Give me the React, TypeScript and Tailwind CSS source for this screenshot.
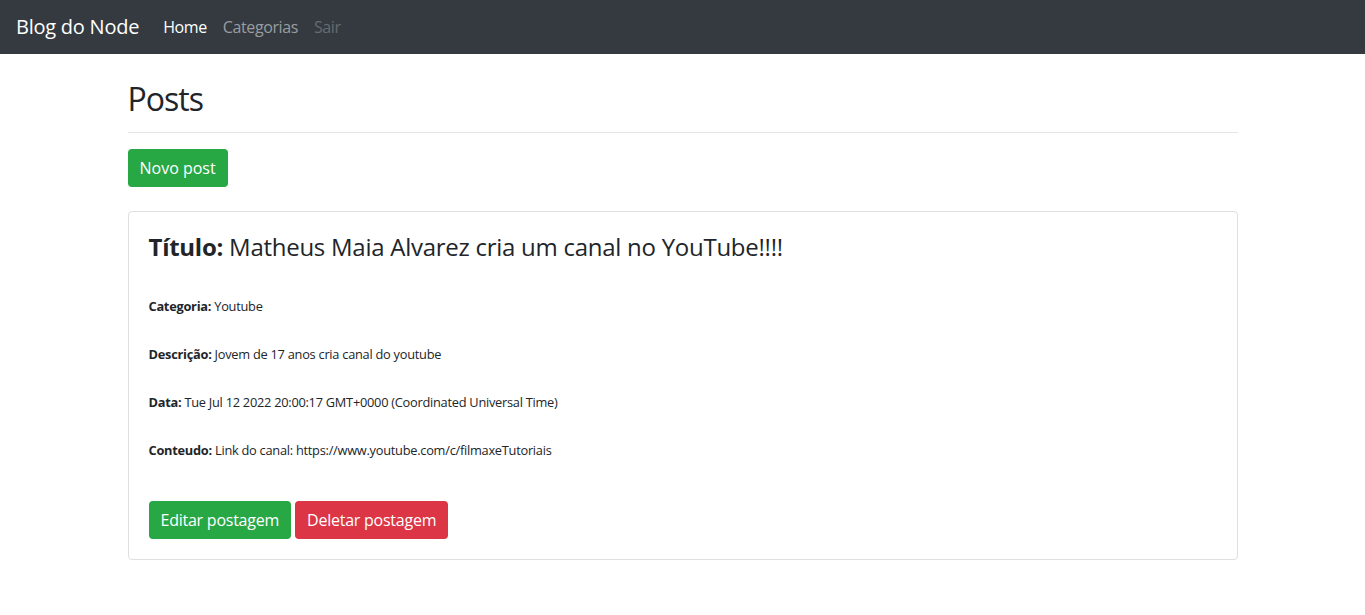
const font = { fontFamily: '"Segoe UI", "Open Sans", "Liberation Sans", sans-serif' };

const Navbar = () => {
  return (
    <nav className="h-[54px] bg-[#343a40] w-full flex items-center px-4">
      {/* Brand */}
      <a href="#" className="text-white text-[20px] leading-[30px] tracking-[-0.012em] mr-4">
        Blog do Node
      </a>

      {/* Links */}
      <div className="flex items-center text-[16px] leading-[24px] tracking-[-0.025em]">
        <a href="#" className="px-2 text-white">Home</a>
        <a href="#" className="px-2 text-[#9a9da0]">Categorias</a>
        <a href="#" className="px-2 text-[#676b70]">Sair</a>
      </div>
    </nav>
  );
};

const Field = ({ label, value }: { label: string; value: string }) => (
  <div className="h-[24px] leading-[24px] text-[12.8px] tracking-[-0.02em]">
    <b className="font-bold">{label}:</b> {value}
  </div>
);

const App = () => {
  return (
    <div className="min-h-screen bg-white text-[#212529]" style={font}>
      <Navbar />

      <div className="w-[1110px] mx-auto">
        {/* Header */}
        <h1 className="mt-[26px] h-[38px] leading-[38px] text-[32px] font-medium tracking-[-0.03em]">Posts</h1>
        <hr className="mt-[14px] border-0 border-t border-[#e5e5e5]" />

        <button className="mt-[16px] h-[38px] px-3 rounded bg-[#28a745] text-white text-[16px] leading-[24px]">
          Novo post
        </button>

        {/* Post card */}
        <div className="mt-[24px] border border-[#dfdfdf] rounded p-5">
          <h4 className="h-[29px] leading-[29px] text-[24px] font-normal tracking-[-0.011em]">
            <b className="font-bold">Título:</b> Matheus Maia Alvarez cria um canal no YouTube!!!!
          </h4>

          <div className="mt-[33px] flex flex-col gap-[24px]">
            <Field label="Categoria" value="Youtube" />
            <Field label="Descrição" value="Jovem de 17 anos cria canal do youtube" />
            <Field label="Data" value="Tue Jul 12 2022 20:00:17 GMT+0000 (Coordinated Universal Time)" />
            <Field label="Conteudo" value="Link do canal: https://www.youtube.com/c/filmaxeTutoriais" />
          </div>

          <div className="mt-[39px] flex gap-1">
            <button className="h-[38px] px-3 rounded bg-[#28a745] text-white text-[16px] leading-[24px] tracking-[-0.015em]">
              Editar postagem
            </button>
            <button className="h-[38px] px-3 rounded bg-[#dc3545] text-white text-[16px] leading-[24px] tracking-[-0.015em]">
              Deletar postagem
            </button>
          </div>
        </div>
      </div>
    </div>
  );
};

export default App;
